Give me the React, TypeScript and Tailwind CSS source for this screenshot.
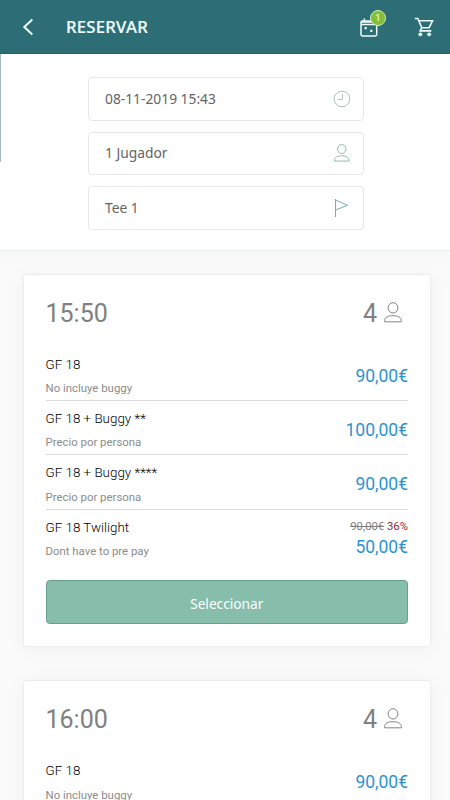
import React from "react";

type Rate = { name: string; note: string; price: string; before?: string; discount?: string };

const RATES: Rate[] = [
  { name: "GF 18", note: "No incluye buggy", price: "90,00€" },
  { name: "GF 18 + Buggy **", note: "Precio por persona", price: "100,00€" },
  { name: "GF 18 + Buggy ****", note: "Precio por persona", price: "90,00€" },
  { name: "GF 18 Twilight", note: "Dont have to pre pay", price: "50,00€", before: "90,00€", discount: "36%" },
];

function Person({ className }: { className: string }) {
  return (
    <svg viewBox="0 0 20 22" fill="none" stroke="currentColor" className={className}>
      <ellipse cx="10" cy="6" rx="5" ry="5.3" />
      <path d="M1.5 20.3v-1.6c0-3 3.5-4.7 8.5-4.7s8.5 1.7 8.5 4.7v1.6z" />
    </svg>
  );
}

function Field({ label, children }: { label: string; children: React.ReactNode }) {
  return (
    <div className="flex h-[43.5px] items-center justify-between rounded-[4px] border border-[#e6e8e8] bg-white pl-4 pr-3">
      <span className="font-['Noto_Sans',sans-serif] text-[13.8px] leading-5 text-[#646464]">{label}</span>
      {children}
    </div>
  );
}

function RateRow({ rate }: { rate: Rate }) {
  return (
    <li className="flex h-[54.4px] justify-between border-b border-[#dcdcdc] pt-[9px] last:border-b-0">
      <div>
        <p className="text-[13.4px] font-light leading-[18px] text-black">{rate.name}</p>
        <p className="mt-[6.5px] text-[11.4px] leading-[16px] text-[#8c8c8c]">{rate.note}</p>
      </div>
      <div className="flex flex-col items-end">
        {rate.before ? (
          <p className="mb-[2px] h-4 text-[11.3px] leading-4">
            <span className="text-[#7d7d7d] line-through">{rate.before}</span>{" "}
            <span className="text-[#8e2630]">{rate.discount}</span>
          </p>
        ) : (
          <div className="h-[10px]" />
        )}
        <p className="text-[17.5px] leading-[20px] text-[#2b93d3]">{rate.price}</p>
      </div>
    </li>
  );
}

function SlotCard({ time, rates, selectable }: { time: string; rates: Rate[]; selectable: boolean }) {
  return (
    <section className="h-[373px] shrink-0 rounded-[3px] border border-[#eceeee] bg-white pl-[21.5px] pr-[22px] shadow-[0_2px_18px_rgba(0,0,0,0.045)]">
      <div className="flex h-[72px] items-center justify-between pt-[6px] text-[25px] leading-8 text-[#808080]">
        <span>{time}</span>
        <span className="flex items-center gap-[6px] pr-[5px]">
          4
          <Person className="h-[21.5px] w-[20px] -translate-y-px" />
        </span>
      </div>
      <ul>
        {rates.map((rate) => (
          <RateRow key={rate.name} rate={rate} />
        ))}
      </ul>
      {selectable && (
        <button className="mt-4 h-[44px] w-full rounded-[4px] border border-[#69a08c] bg-[#86bdab] pt-[3px] font-['Noto_Sans',sans-serif] text-[13.7px] leading-5 text-white">
          Seleccionar
        </button>
      )}
    </section>
  );
}

export default function App() {
  return (
    <div className="relative flex h-[800px] w-[450px] flex-col overflow-hidden bg-[#fafafa] font-[Roboto,sans-serif]">
      <header className="flex h-[54px] shrink-0 items-center border-b border-[#25646b] bg-[#2d6e76] text-[#f0ffff]">
        <svg viewBox="0 0 12 18" className="ml-[22px] h-[18px] w-[12px]" fill="none" stroke="currentColor" strokeWidth="2">
          <path d="M10.3 1.5L2.3 9l8 7.5" />
        </svg>
        <h1 className="ml-[32px] font-['Noto_Sans',sans-serif] text-[16.7px] font-medium leading-6 tracking-[0.25px] [-webkit-text-stroke:0.2px_currentColor]">
          RESERVAR
        </h1>
        <div className="relative ml-auto mr-[36px] mt-[2px] h-5 w-[18px]">
          <svg viewBox="0 0 18 20" className="h-5 w-[18px]" fill="none" stroke="currentColor" strokeWidth="1.5">
            <rect x="1" y="3" width="15.7" height="15" rx="1.4" />
            <path d="M1 4h15.7M1 6.5h15.7M4.3 .5v3M13.3 .5v3" />
            <path d="M4.6 10.2h2.2M10.2 12.8h2.2" strokeWidth="2.2" />
          </svg>
          <span className="absolute -top-[8px] left-[10px] flex h-4 w-4 items-center justify-center rounded-full border border-[#d3ecb0] bg-[#82bf3a] pt-px text-[9.5px] leading-none text-white">
            1
          </span>
        </div>
        <svg viewBox="0 0 20 20" className="mr-[16px] mt-px h-5 w-5" fill="none" stroke="currentColor" strokeWidth="1.6">
          <path d="M.8 1.5h3l4 9.2h7.3l3.4-6.9H4.8M7.8 10.7l-1.7 3.2h11.2" />
          <circle cx="6.3" cy="17.3" r="1.9" fill="currentColor" stroke="none" />
          <circle cx="15.2" cy="17.3" r="1.9" fill="currentColor" stroke="none" />
        </svg>
      </header>
      <div className="absolute left-0 top-[54px] h-[108px] w-px bg-[#a4bcbc]" />

      <div className="flex h-[197px] shrink-0 flex-col gap-[11px] border-b border-[#e9eeee] bg-white pl-[88px] pr-[86.5px] pt-[23px] shadow-[0_2px_14px_rgba(0,0,0,0.03)]">
        <Field label="08-11-2019 15:43">
          <svg viewBox="0 0 18 18" className="h-[18px] w-[18px] text-[#aebfba]" fill="none" stroke="currentColor">
            <circle cx="9" cy="9" r="7.8" />
            <path d="M9.4 3.5v6H4.6" />
          </svg>
        </Field>
        <Field label="1 Jugador">
          <Person className="h-[18.5px] w-[17.5px] text-[#80ada0]" />
        </Field>
        <Field label="Tee 1">
          <svg viewBox="0 0 18 20" className="h-5 w-[18px] text-[#80ada0]" fill="none" stroke="currentColor">
            <path d="M2.5 1v18M2.5 2l12 5.3-12 4.8" />
          </svg>
        </Field>
      </div>

      <main className="flex flex-col gap-[33.5px] pl-[23px] pr-[19px] pt-[22.5px]">
        <SlotCard time="15:50" rates={RATES} selectable />
        <SlotCard time="16:00" rates={RATES.slice(0, 1)} selectable={false} />
      </main>
    </div>
  );
}
